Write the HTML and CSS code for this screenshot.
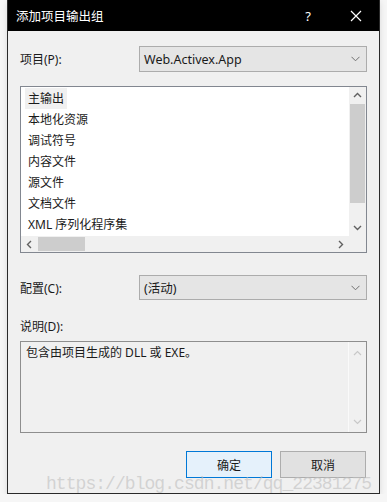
FILE: index.html
```html
<!DOCTYPE html>
<html lang="zh-CN">
<head>
  <meta charset="UTF-8" />
  <title>添加项目输出组</title>
  <link rel="stylesheet" href="styles.css">
</head>
<body>
  <div class="window">
    <div class="titlebar">
      <span class="title">添加项目输出组</span>
      <span class="help">?</span>
      <svg class="close" width="12" height="12" viewBox="0 0 12 12">
        <path d="M1 1 L11 11 M11 1 L1 11" stroke="#fff" stroke-width="1.2" fill="none"/>
      </svg>
    </div>

    <div class="content">
      <div class="row">
        <label>项目(P):</label>
        <div class="select">
          <span>Web.Activex.App</span>
          <svg width="9" height="6" viewBox="0 0 9 6"><path d="M0.5 0.8 L4.5 4.8 L8.5 0.8" stroke="#707070" fill="none"/></svg>
        </div>
      </div>

      <div class="listbox">
        <ul class="items">
          <li class="current">主输出</li>
          <li>本地化资源</li>
          <li>调试符号</li>
          <li>内容文件</li>
          <li>源文件</li>
          <li>文档文件</li>
          <li>XML 序列化程序集</li>
        </ul>
        <div class="vscroll">
          <svg width="9" height="6" viewBox="0 0 9 6"><path d="M1 5 L4.5 1.5 L8 5" stroke="#606060" stroke-width="1.4" fill="none"/></svg>
          <div class="track"><div class="vthumb"></div></div>
          <svg width="9" height="6" viewBox="0 0 9 6"><path d="M1 1 L4.5 4.5 L8 1" stroke="#606060" stroke-width="1.4" fill="none"/></svg>
        </div>
        <div class="hscroll">
          <svg width="6" height="9" viewBox="0 0 6 9"><path d="M5 1 L1.5 4.5 L5 8" stroke="#606060" stroke-width="1.4" fill="none"/></svg>
          <div class="track"><div class="hthumb"></div></div>
          <svg width="6" height="9" viewBox="0 0 6 9"><path d="M1 1 L4.5 4.5 L1 8" stroke="#606060" stroke-width="1.4" fill="none"/></svg>
        </div>
        <div class="corner"></div>
      </div>

      <div class="row config">
        <label>配置(C):</label>
        <div class="select">
          <span>(活动)</span>
          <svg width="9" height="6" viewBox="0 0 9 6"><path d="M0.5 0.8 L4.5 4.8 L8.5 0.8" stroke="#707070" fill="none"/></svg>
        </div>
      </div>

      <div class="desc-label">说明(D):</div>
      <div class="desc">
        <div class="desc-text">包含由项目生成的 DLL 或 EXE。</div>
        <div class="desc-scroll">
          <svg width="9" height="6" viewBox="0 0 9 6"><path d="M1 5 L4.5 1.5 L8 5" stroke="#c8c8c8" stroke-width="1.2" fill="none"/></svg>
          <svg width="9" height="6" viewBox="0 0 9 6"><path d="M1 1 L4.5 4.5 L8 1" stroke="#c8c8c8" stroke-width="1.2" fill="none"/></svg>
        </div>
      </div>

      <div class="buttons">
        <button class="ok">确定</button>
        <button>取消</button>
      </div>
    </div>

    <div class="watermark">https://blog.csdn.net/qq_22381275</div>
  </div>
</body>
</html>
```

FILE: styles.css
```css
body {
  margin: 0;
  background: #f6f6f6;
  font-family: "Noto Sans", "Noto Sans CJK SC", sans-serif;
  font-size: 12px;
  color: #1a1a1a;
}

.window {
  position: relative;
  margin-left: 7px;
  width: 373px;
  height: 494px;
  box-sizing: border-box;
  border: 1px solid #2a2a2a;
  border-top: none;
  background: #f0f0f0;
  box-shadow: 0 2px 6px rgba(0, 0, 0, 0.12);
  overflow: hidden;
}

.titlebar {
  height: 31px;
  background: #000;
  color: #fff;
  display: flex;
  align-items: center;
  padding-left: 8px;
}

.title {
  font-family: "Noto Sans CJK SC", sans-serif;
  font-size: 12.5px;
  flex: 1;
}

.help {
  font-size: 13px;
  margin-right: 39px;
}

.close {
  margin-right: 17px;
}

.content {
  padding: 15px 12px 0 12px;
}

.row {
  display: flex;
  align-items: center;
  height: 26px;
}

.row label {
  width: 119px;
  flex: none;
}

.select {
  width: 228px;
  height: 26px;
  box-sizing: border-box;
  border: 1px solid #acacac;
  background: #e5e5e5;
  display: flex;
  align-items: center;
  justify-content: space-between;
  padding: 0 6px 0 4px;
  font-size: 12.5px;
}

.listbox {
  margin-top: 14px;
  height: 167px;
  box-sizing: border-box;
  border: 1px solid #828790;
  background: #fff;
  display: grid;
  grid-template-columns: 1fr 17px;
  grid-template-rows: 1fr 16px;
}

.items {
  list-style: none;
  margin: 0;
  padding: 1px 0 0 4px;
  overflow: hidden;
}

.items li {
  height: 21px;
  line-height: 21px;
  padding: 0 3px;
  width: max-content;
}

.items li.current {
  background: #f0f0f0;
}

.vscroll {
  background: #f0f0f0;
  display: flex;
  flex-direction: column;
  align-items: center;
}

.vscroll svg {
  flex: none;
  margin: 5px 0;
}

.vscroll .track {
  flex: 1;
  width: 100%;
}

.vthumb {
  margin: 1px 1px 0 1px;
  height: 99px;
  background: #cdcdcd;
}

.hscroll {
  background: #f0f0f0;
  display: flex;
  align-items: center;
}

.hscroll svg {
  flex: none;
  margin: 0 5px;
}

.hscroll .track {
  flex: 1;
  height: 100%;
}

.hthumb {
  margin: 1px 0 0 1px;
  width: 47px;
  height: 14px;
  background: #cdcdcd;
}

.corner {
  background: #f0f0f0;
}

.config {
  margin-top: 22px;
  height: 25px;
}

.config .select {
  height: 25px;
}

.desc-label {
  margin-top: 17px;
  line-height: 20px;
}

.desc {
  margin-top: 4px;
  height: 92px;
  box-sizing: border-box;
  border: 1px solid #8e8e8e;
  background: #f0f0f0;
  display: flex;
}

.desc-text {
  flex: 1;
  padding: 2px 5px;
  line-height: 18px;
}

.desc-scroll {
  width: 17px;
  border-left: 1px solid #fafafa;
  display: flex;
  flex-direction: column;
  justify-content: space-between;
  align-items: center;
  padding: 8px 0 7px;
}

.buttons {
  margin-top: 18px;
  display: flex;
  justify-content: flex-end;
  gap: 8px;
  padding-right: 1px;
}

.buttons button {
  width: 86px;
  height: 27px;
  border: 1px solid #adadad;
  background: #e1e1e1;
  font-family: "Noto Sans CJK SC", sans-serif;
  font-size: 12px;
  color: #1a1a1a;
  padding: 0;
}

.buttons button.ok {
  border-color: #0078d7;
  background: #e5f1fb;
}

.watermark {
  position: absolute;
  left: 38px;
  top: 475px;
  font-family: "Liberation Mono", monospace;
  font-size: 18px;
  line-height: 18px;
  letter-spacing: -0.95px;
  color: rgba(190, 190, 190, 0.6);
  white-space: nowrap;
  pointer-events: none;
}
```
